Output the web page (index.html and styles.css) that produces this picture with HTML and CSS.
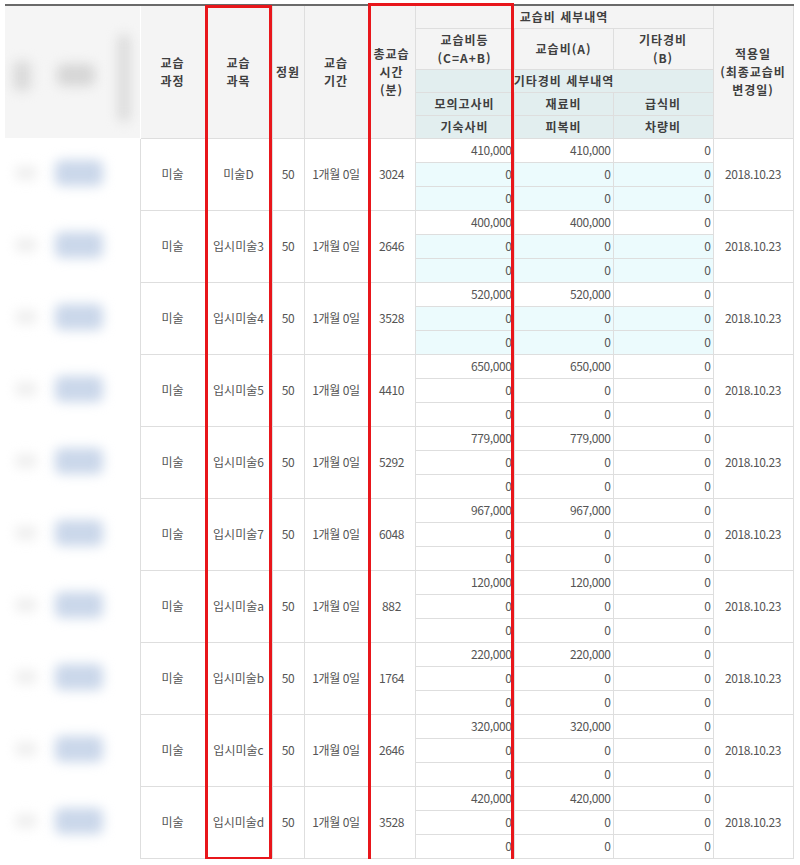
FILE: index.html
```html
<!DOCTYPE html>
<html lang="ko">
<head>
<meta charset="utf-8">
<title>교습비</title>
<link rel="stylesheet" href="styles.css">
</head>
<body>
<div class="wrap">
<table class="fee">
<colgroup>
<col class="c-bl"><col class="c-crs"><col class="c-sub"><col class="c-cap"><col class="c-per"><col class="c-min"><col class="c-num"><col class="c-num"><col class="c-num2"><col class="c-date">
</colgroup>
<thead>
<tr class="h1">
<th class="bl" rowspan="5"><span class="blob g1"></span><span class="blob g2"></span><span class="blob g3"></span></th>
<th rowspan="5">교습<br>과정</th>
<th rowspan="5">교습<br>과목</th>
<th rowspan="5">정원</th>
<th rowspan="5">교습<br>기간</th>
<th rowspan="5">총교습<br>시간<br>(분)</th>
<th colspan="3">교습비 세부내역</th>
<th rowspan="5">적용일<br>(최종교습비<br>변경일)</th>
</tr>
<tr class="h2">
<th>교습비등<br>(C=A+B)</th>
<th>교습비(A)</th>
<th>기타경비<br>(B)</th>
</tr>
<tr class="h3 sub"><th colspan="3">기타경비 세부내역</th></tr>
<tr class="h4 sub"><th>모의고사비</th><th>재료비</th><th>급식비</th></tr>
<tr class="h5 sub"><th>기숙사비</th><th>피복비</th><th>차량비</th></tr>
</thead>
<tbody>
<tr><td class="bl" rowspan="3"><span class="blob r1"></span><span class="blob r2"></span></td><td rowspan="3">미술</td><td rowspan="3">미술D</td><td rowspan="3" class="n">50</td><td rowspan="3" class="n">1개월 0일</td><td rowspan="3" class="n">3024</td><td class="v">410,000</td><td class="v">410,000</td><td class="v">0</td><td rowspan="3" class="n">2018.10.23</td></tr>
<tr class="tint"><td class="v">0</td><td class="v">0</td><td class="v">0</td></tr>
<tr class="tint"><td class="v">0</td><td class="v">0</td><td class="v">0</td></tr>

<tr><td class="bl" rowspan="3"><span class="blob r1"></span><span class="blob r2"></span></td><td rowspan="3">미술</td><td rowspan="3">입시미술3</td><td rowspan="3" class="n">50</td><td rowspan="3" class="n">1개월 0일</td><td rowspan="3" class="n">2646</td><td class="v">400,000</td><td class="v">400,000</td><td class="v">0</td><td rowspan="3" class="n">2018.10.23</td></tr>
<tr class="tint"><td class="v">0</td><td class="v">0</td><td class="v">0</td></tr>
<tr class="tint"><td class="v">0</td><td class="v">0</td><td class="v">0</td></tr>

<tr><td class="bl" rowspan="3"><span class="blob r1"></span><span class="blob r2"></span></td><td rowspan="3">미술</td><td rowspan="3">입시미술4</td><td rowspan="3" class="n">50</td><td rowspan="3" class="n">1개월 0일</td><td rowspan="3" class="n">3528</td><td class="v">520,000</td><td class="v">520,000</td><td class="v">0</td><td rowspan="3" class="n">2018.10.23</td></tr>
<tr class="tint"><td class="v">0</td><td class="v">0</td><td class="v">0</td></tr>
<tr class="tint"><td class="v">0</td><td class="v">0</td><td class="v">0</td></tr>

<tr><td class="bl" rowspan="3"><span class="blob r1"></span><span class="blob r2"></span></td><td rowspan="3">미술</td><td rowspan="3">입시미술5</td><td rowspan="3" class="n">50</td><td rowspan="3" class="n">1개월 0일</td><td rowspan="3" class="n">4410</td><td class="v">650,000</td><td class="v">650,000</td><td class="v">0</td><td rowspan="3" class="n">2018.10.23</td></tr>
<tr><td class="v">0</td><td class="v">0</td><td class="v">0</td></tr>
<tr><td class="v">0</td><td class="v">0</td><td class="v">0</td></tr>

<tr><td class="bl" rowspan="3"><span class="blob r1"></span><span class="blob r2"></span></td><td rowspan="3">미술</td><td rowspan="3">입시미술6</td><td rowspan="3" class="n">50</td><td rowspan="3" class="n">1개월 0일</td><td rowspan="3" class="n">5292</td><td class="v">779,000</td><td class="v">779,000</td><td class="v">0</td><td rowspan="3" class="n">2018.10.23</td></tr>
<tr><td class="v">0</td><td class="v">0</td><td class="v">0</td></tr>
<tr><td class="v">0</td><td class="v">0</td><td class="v">0</td></tr>

<tr><td class="bl" rowspan="3"><span class="blob r1"></span><span class="blob r2"></span></td><td rowspan="3">미술</td><td rowspan="3">입시미술7</td><td rowspan="3" class="n">50</td><td rowspan="3" class="n">1개월 0일</td><td rowspan="3" class="n">6048</td><td class="v">967,000</td><td class="v">967,000</td><td class="v">0</td><td rowspan="3" class="n">2018.10.23</td></tr>
<tr><td class="v">0</td><td class="v">0</td><td class="v">0</td></tr>
<tr><td class="v">0</td><td class="v">0</td><td class="v">0</td></tr>

<tr><td class="bl" rowspan="3"><span class="blob r1"></span><span class="blob r2"></span></td><td rowspan="3">미술</td><td rowspan="3">입시미술a</td><td rowspan="3" class="n">50</td><td rowspan="3" class="n">1개월 0일</td><td rowspan="3" class="n">882</td><td class="v">120,000</td><td class="v">120,000</td><td class="v">0</td><td rowspan="3" class="n">2018.10.23</td></tr>
<tr><td class="v">0</td><td class="v">0</td><td class="v">0</td></tr>
<tr><td class="v">0</td><td class="v">0</td><td class="v">0</td></tr>

<tr><td class="bl" rowspan="3"><span class="blob r1"></span><span class="blob r2"></span></td><td rowspan="3">미술</td><td rowspan="3">입시미술b</td><td rowspan="3" class="n">50</td><td rowspan="3" class="n">1개월 0일</td><td rowspan="3" class="n">1764</td><td class="v">220,000</td><td class="v">220,000</td><td class="v">0</td><td rowspan="3" class="n">2018.10.23</td></tr>
<tr><td class="v">0</td><td class="v">0</td><td class="v">0</td></tr>
<tr><td class="v">0</td><td class="v">0</td><td class="v">0</td></tr>

<tr><td class="bl" rowspan="3"><span class="blob r1"></span><span class="blob r2"></span></td><td rowspan="3">미술</td><td rowspan="3">입시미술c</td><td rowspan="3" class="n">50</td><td rowspan="3" class="n">1개월 0일</td><td rowspan="3" class="n">2646</td><td class="v">320,000</td><td class="v">320,000</td><td class="v">0</td><td rowspan="3" class="n">2018.10.23</td></tr>
<tr><td class="v">0</td><td class="v">0</td><td class="v">0</td></tr>
<tr><td class="v">0</td><td class="v">0</td><td class="v">0</td></tr>

<tr><td class="bl" rowspan="3"><span class="blob r1"></span><span class="blob r2"></span></td><td rowspan="3">미술</td><td rowspan="3">입시미술d</td><td rowspan="3" class="n">50</td><td rowspan="3" class="n">1개월 0일</td><td rowspan="3" class="n">3528</td><td class="v">420,000</td><td class="v">420,000</td><td class="v">0</td><td rowspan="3" class="n">2018.10.23</td></tr>
<tr><td class="v">0</td><td class="v">0</td><td class="v">0</td></tr>
<tr><td class="v">0</td><td class="v">0</td><td class="v">0</td></tr>
</tbody>
</table>
<div class="mark mark-sub"></div>
<div class="mark mark-fee"></div>
</div>
</body>
</html>
```
FILE: styles.css
```css
html, body {
  margin: 0;
  padding: 0;
  background: #fff;
}
body {
  font-family: "Noto Sans CJK KR", "Noto Sans", sans-serif;
  color: #555;
}
.wrap {
  position: relative;
  padding: 4px 0 0 5px;
  width: 788px;
}
.fee {
  border-collapse: collapse;
  table-layout: fixed;
  width: 788px;
  border-top: 2px solid #6a6a6a;
}
.c-bl { width: 135px; }
.c-crs { width: 65px; }
.c-sub { width: 67px; }
.c-cap { width: 32px; }
.c-per { width: 64px; }
.c-min { width: 47px; }
.c-num { width: 99px; }
.c-num2 { width: 100px; }
.c-date { width: 80px; }

.fee th, .fee td {
  border: 1px solid #dedede;
  padding: 0;
  text-align: center;
  vertical-align: middle;
  overflow: hidden;
  white-space: nowrap;
}
.fee th {
  background: #f4f4f4;
  color: #3f3f3f;
  font-size: 12px;
  font-weight: bold;
  letter-spacing: 1px;
  line-height: 18px;
}
.fee .h1 { height: 23px; }
.fee .h2 { height: 41px; }
.fee .h3, .fee .h4, .fee .h5 { height: 23px; }
.fee .sub th { background: #e2eeef; }

.fee td {
  font-size: 12px;
  line-height: 14px;
  height: 23px;
  color: #555;
}
.fee td.n { letter-spacing: -0.4px; }
.fee td.v {
  text-align: right;
  padding-right: 2px;
  letter-spacing: -0.4px;
}
.fee tr.tint td { background: #ecfbfd; }

.fee .bl {
  position: relative;
  border: none;
  background: #fff;
}
.fee thead .bl { background: #f5f5f5; border-right: 1px solid #fff; }
.fee tbody .bl { border-right: 1px solid #dedede; }

.blob {
  position: absolute;
  display: block;
  filter: blur(6px);
  border-radius: 6px;
}
.g1 { left: 8px; top: 55px; width: 18px; height: 30px; background: #dadada; }
.g2 { left: 52px; top: 58px; width: 38px; height: 22px; background: #d6d6d6; }
.g3 { left: 113px; top: 28px; width: 12px; height: 88px; background: #dadada; }
.r1 { left: 10px; top: 28px; width: 22px; height: 14px; background: #eeeeee; }
.r2 { left: 50px; top: 22px; width: 48px; height: 26px; background: #cad7ea; }

.mark {
  position: absolute;
  border: 3px solid #e8161b;
  box-sizing: border-box;
  pointer-events: none;
}
.mark-sub { left: 205px; top: 5px; width: 67px; height: 855px; }
.mark-fee { left: 368px; top: 3px; width: 146px; height: 859px; }
```
